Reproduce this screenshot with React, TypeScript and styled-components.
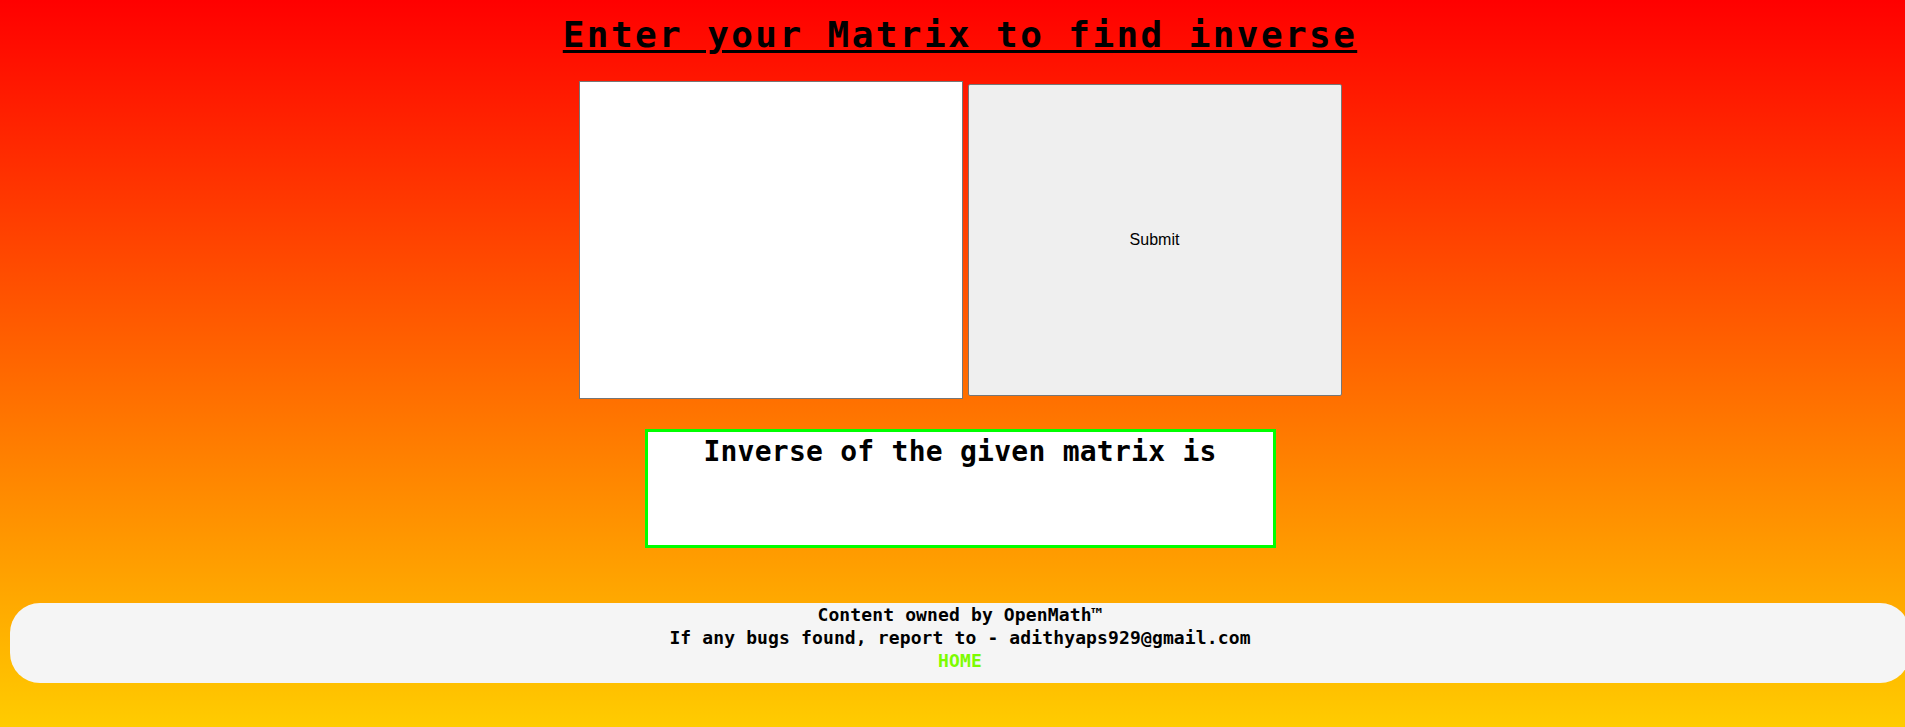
import styled, { createGlobalStyle } from 'styled-components';

const GlobalStyle = createGlobalStyle`
  html, body {
    margin: 0;
    padding: 0;
    overflow: hidden;
  }

  body {
    background: linear-gradient(#ff0000, #ffcc00);
    min-height: 727px;
  }
`;

const Page = styled.div`
  width: 1920px;
  min-height: 727px;
  display: flex;
  flex-direction: column;
  align-items: center;
  font-family: 'DejaVu Sans Mono', 'Liberation Mono', monospace;
`;

const Title = styled.h1`
  margin: 0;
  padding-top: 14px;
  font-size: 36px;
  line-height: 42px;
  font-weight: bold;
  letter-spacing: 2.4px;
  color: #000;
  text-decoration: underline;
  text-decoration-thickness: 3px;
  text-underline-offset: 3px;
`;

const InputRow = styled.form`
  margin-top: 25px;
  display: flex;
  align-items: center;
  gap: 5px;
`;

const MatrixInput = styled.textarea`
  box-sizing: border-box;
  width: 384px;
  height: 318px;
  margin: 0;
  border: 1px solid #767676;
  background: #fff;
  resize: none;
  outline: none;
`;

const SubmitButton = styled.button`
  box-sizing: border-box;
  width: 374px;
  height: 312px;
  margin: 0;
  border: 1px solid #767676;
  border-radius: 2px;
  background: #efefef;
  color: #000;
  font-family: 'Liberation Sans', Arial, sans-serif;
  font-size: 16px;
`;

const ResultBox = styled.div`
  box-sizing: border-box;
  margin-top: 30px;
  width: 631px;
  height: 119px;
  border: 3px solid #00ff00;
  background: #fff;
  padding-top: 3px;
  text-align: center;
`;

const ResultHeading = styled.h2`
  margin: 0;
  font-size: 28px;
  line-height: 33px;
  letter-spacing: 0.25px;
  font-weight: bold;
  color: #000;
`;

const Footer = styled.footer`
  box-sizing: border-box;
  align-self: flex-start;
  margin: 55px 0 0 10px;
  width: 1900px;
  height: 80px;
  border-radius: 30px;
  background: #f5f5f5;
  display: flex;
  flex-direction: column;
  align-items: center;
`;

const FooterLine = styled.div`
  font-size: 18px;
  line-height: 23px;
  letter-spacing: 0.13px;
  font-weight: bold;
  color: #000;
`;

const HomeLink = styled.a`
  font-size: 18px;
  line-height: 23px;
  letter-spacing: 0.13px;
  font-weight: bold;
  color: #7cfc00;
  text-decoration: none;
`;

export default function App() {
  return (
    <>
      <GlobalStyle />
      <Page>
        <Title>Enter your Matrix to find inverse</Title>
        <InputRow onSubmit={(e) => e.preventDefault()}>
          <MatrixInput />
          <SubmitButton type="submit">Submit</SubmitButton>
        </InputRow>
        <ResultBox>
          <ResultHeading>Inverse of the given matrix is</ResultHeading>
        </ResultBox>
        <Footer>
          <FooterLine>Content owned by OpenMath™</FooterLine>
          <FooterLine>If any bugs found, report to - adithyaps929@gmail.com</FooterLine>
          <HomeLink href="#">HOME</HomeLink>
        </Footer>
      </Page>
    </>
  );
}
